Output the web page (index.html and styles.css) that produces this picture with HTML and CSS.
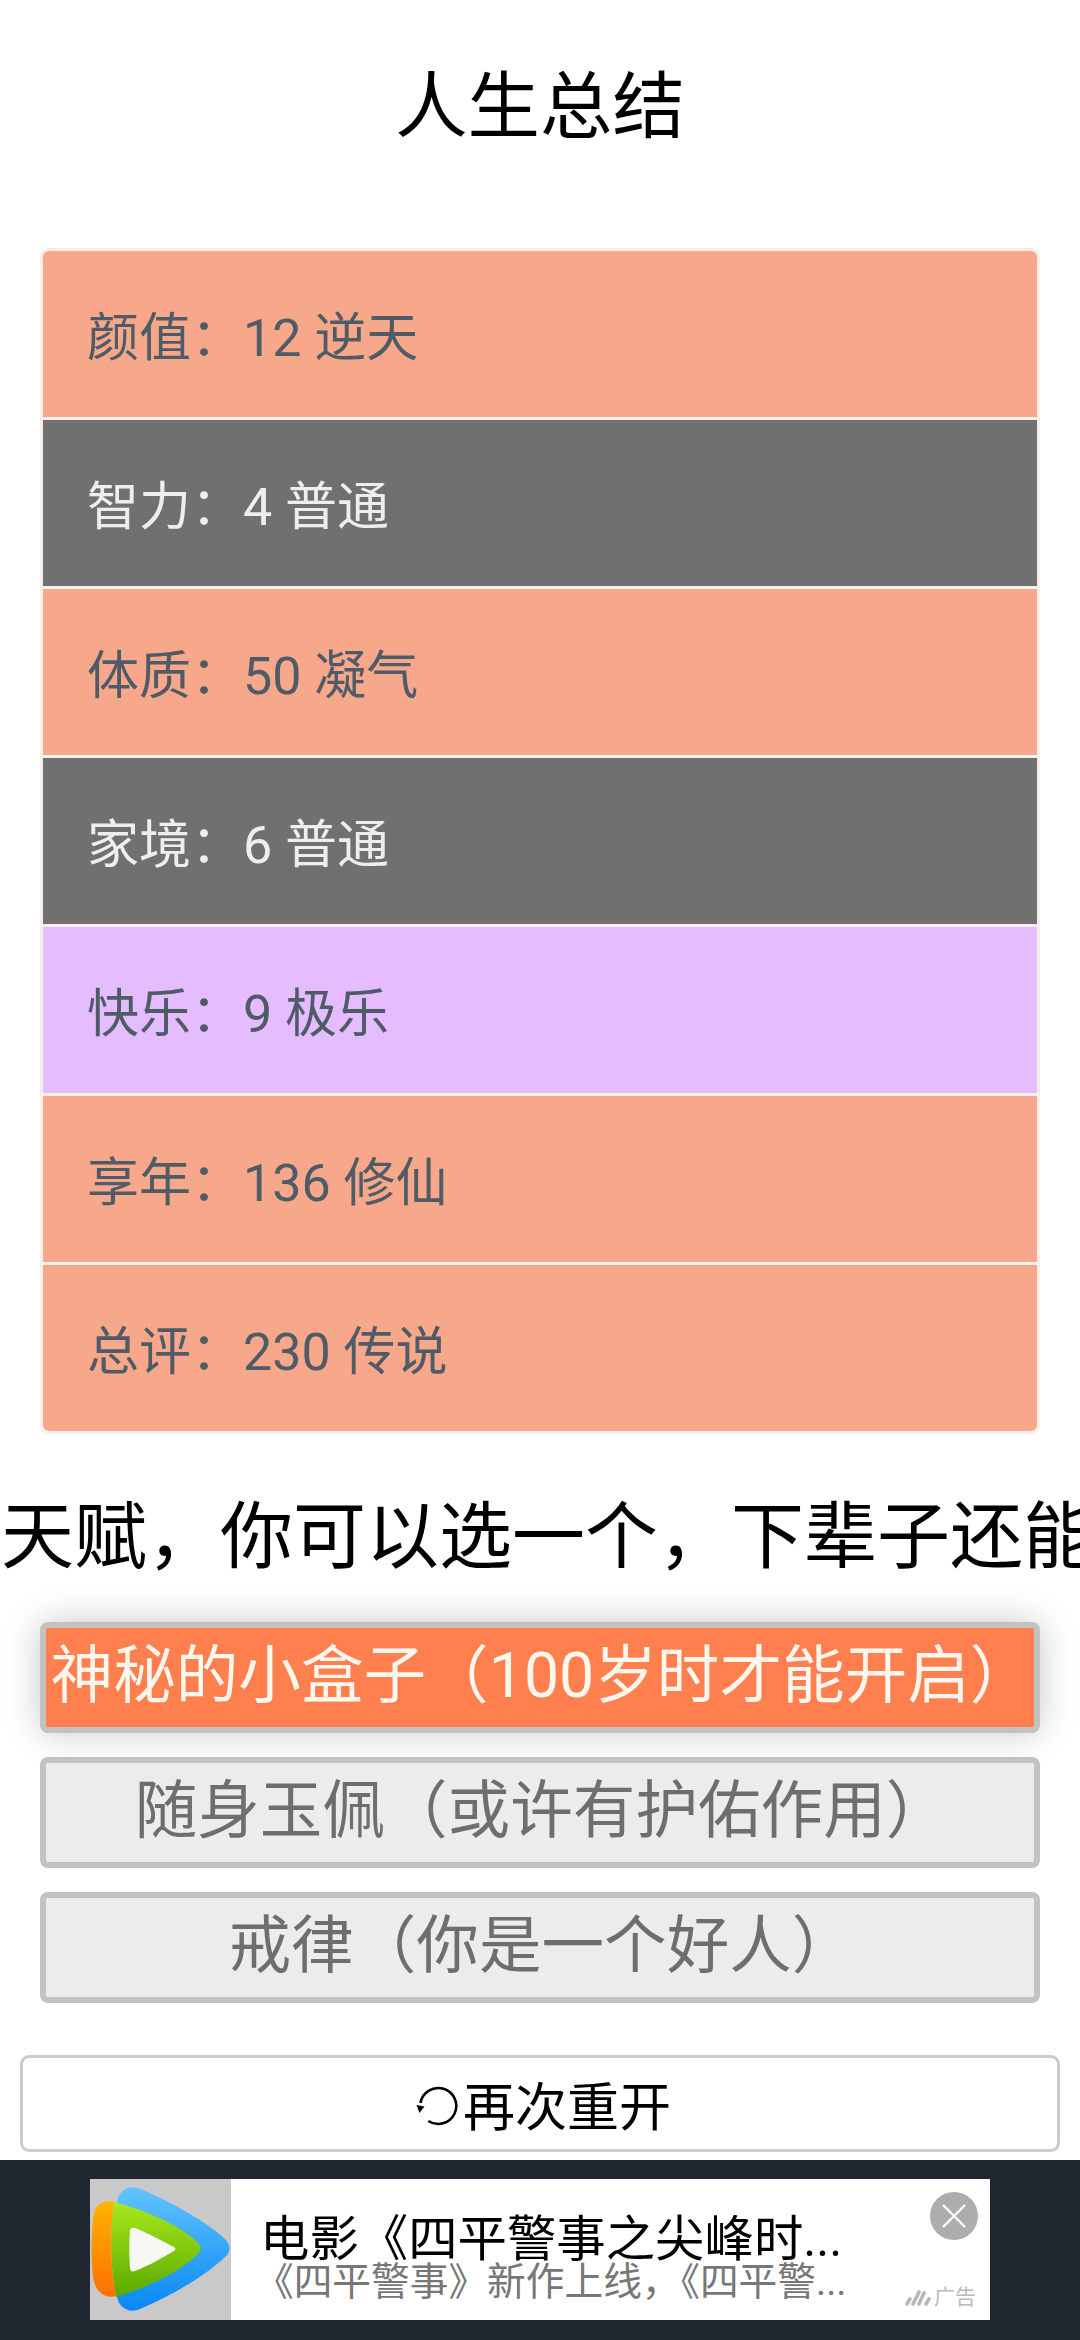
FILE: index.html
```html
<!DOCTYPE html>
<html lang="zh-CN">
<head>
<meta charset="utf-8">
<title>人生总结</title>
<link rel="stylesheet" href="styles.css">
</head>
<body>
<main class="page">
  <h1 class="title">人生总结</h1>
  <ul class="summary">
    <li class="row peach">颜值：12 逆天</li>
    <li class="row gray">智力：4 普通</li>
    <li class="row peach">体质：50 凝气</li>
    <li class="row gray">家境：6 普通</li>
    <li class="row violet">快乐：9 极乐</li>
    <li class="row peach">享年：136 修仙</li>
    <li class="row peach">总评：230 传说</li>
  </ul>
  <h2 class="prompt">天赋，你可以选一个，下辈子还能</h2>
  <div class="talents">
    <button class="talent selected">神秘的小盒子（100岁时才能开启）</button>
    <button class="talent">随身玉佩（或许有护佑作用）</button>
    <button class="talent">戒律（你是一个好人）</button>
  </div>
  <button class="restart">
    <svg class="restart-icon" viewBox="0 0 42 40" aria-hidden="true">
      <path d="M4.5 17 A18 18 0 1 1 12.3 35" fill="none" stroke="#000" stroke-width="2.6"/>
      <path d="M0.5 19 L8.5 20.5 L3.5 27 Z" fill="#000"/>
    </svg>再次重开
  </button>
</main>
<footer class="ad-band">
  <div class="ad">
    <div class="ad-image">
      <svg viewBox="0 0 141 141" class="ad-logo" aria-hidden="true">
        <defs>
          <linearGradient id="blue" x1="0" y1="0" x2="0" y2="1"><stop offset="0" stop-color="#62c4ff"/><stop offset="1" stop-color="#0887f4"/></linearGradient>
          <linearGradient id="green" x1="0" y1="0" x2="0" y2="1"><stop offset="0" stop-color="#a9e81c"/><stop offset="1" stop-color="#5aaa00"/></linearGradient>
          <linearGradient id="orange" x1="0" y1="0" x2="0" y2="1"><stop offset="0" stop-color="#ffb400"/><stop offset="1" stop-color="#ff6f00"/></linearGradient>
        </defs>
        <path d="M27 24 C28 12 38 6 48 9 C85 24 122 47 135 60 C141 66 141 73 135 78 C122 91 90 113 50 130 C38 135 29 128 27 118 Z" fill="url(#blue)"/>
        <path d="M24 23 C60 32 95 50 107 63 C112 68 112 71 107 76 C90 92 60 108 26 118 C20 90 20 50 24 23 Z" fill="url(#green)"/>
        <path d="M24 23 C12 20 4 26 3 40 C1 60 1 80 3 98 C5 112 14 120 26 117 C20 90 20 50 24 23 Z" fill="url(#orange)"/>
        <path d="M40 52 C40 49 42 48 45 49 C60 55 72 62 84 68 C86 69 86 71 84 72 C72 79 60 86 45 92 C42 93 40 92 40 89 C39 76 39 64 40 52 Z" fill="#f6f8f4"/>
      </svg>
    </div>
    <div class="ad-text">
      <p class="ad-title">电影《四平警事之尖峰时...</p>
      <p class="ad-sub">《四平警事》新作上线，《四平警...</p>
    </div>
    <div class="ad-side">
      <svg class="ad-close" viewBox="0 0 48 48" aria-hidden="true">
        <circle cx="24" cy="24" r="24" fill="#adadad"/>
        <path d="M13 13 L35 35 M35 13 L13 35" stroke="#fff" stroke-width="2.4"/>
      </svg>
      <div class="ad-mark">
        <svg class="ad-stripes" viewBox="0 0 26 18" aria-hidden="true">
          <path d="M2 16 L5 11 M8 16 L14 4 M14 16 L19 5 M21 16 L24 11" stroke="#b8b8b8" stroke-width="3.6" stroke-linecap="round"/>
        </svg>
        <span>广告</span>
      </div>
    </div>
  </div>
</footer>
</body>
</html>
```
FILE: styles.css
```css
* { box-sizing: border-box; }
html, body { margin: 0; padding: 0; }
body {
  width: 1080px;
  height: 2340px;
  overflow: hidden;
  background: #fff;
  display: flex;
  flex-direction: column;
  font-family: Roboto, "Noto Sans CJK SC", sans-serif;
}
.page { flex: 1; display: flex; flex-direction: column; align-items: center; }
.title {
  margin: 0;
  padding-top: 57px;
  height: 248px;
  font-size: 72.4px;
  line-height: 102px;
  font-weight: 400;
  color: #000;
  text-align: center;
}
.summary {
  list-style: none;
  margin: 0;
  padding: 0;
  width: 1000px;
  border: 3px solid #f6efe9;
  border-bottom-color: #eff0f0;
  border-radius: 9px;
  overflow: hidden;
  display: flex;
  flex-direction: column;
  gap: 3px;
  background: #f7efe9;
}
.row {
  height: 166px;
  padding: 0 0 2px 44px;
  display: flex;
  align-items: center;
  font-size: 52px;
  color: #4f5b66;
}
.peach { background: #f8a88a; }
.gray { background: #707070; color: #eee; }
.violet { background: #e5bcff; }
.prompt {
  margin: 0;
  width: 1080px;
  padding: 53px 0 0 1px;
  height: 188px;
  font-size: 73px;
  line-height: 100px;
  font-weight: 400;
  white-space: nowrap;
  overflow: hidden;
  color: #000;
}
.talents { display: flex; flex-direction: column; gap: 24px; width: 1000px; }
.talent {
  height: 111px;
  padding: 0 0 2px 3px;
  border: 6px solid #c2c2c2;
  border-radius: 8px;
  background: #ececec;
  color: #6e6e6e;
  font: inherit;
  font-size: 62.6px;
  line-height: 1;
  white-space: nowrap;
}
.talent.selected {
  background: #ff7f4f;
  color: #fff6ee;
  box-shadow: 0 0 36px rgba(0, 0, 0, .22);
}
.restart {
  margin-top: 52px;
  width: 1040px;
  height: 97px;
  padding: 0 0 0 5px;
  border: 3px solid #ccc;
  border-radius: 9px;
  background: #fff;
  color: #000;
  font: inherit;
  font-size: 52px;
  display: flex;
  align-items: center;
  justify-content: center;
}
.restart-icon { width: 42px; height: 40px; margin: 4px 5px 0 2px; }
.ad-band {
  height: 180px;
  background: #1f2630;
  padding-top: 19px;
  display: flex;
  justify-content: center;
  flex: none;
}
.ad {
  width: 900px;
  height: 141px;
  background: #fff;
  display: flex;
}
.ad-image { width: 141px; height: 141px; background: #c9c9c9; flex: none; }
.ad-logo { display: block; width: 141px; height: 141px; }
.ad-text { flex: 1; padding: 31px 0 0 29px; min-width: 0; }
.ad-title {
  margin: 0;
  font-size: 49.4px;
  line-height: 58px;
  color: #000;
  white-space: nowrap;
}
.ad-sub {
  margin: -10px 0 0 -5px;
  font-size: 38.7px;
  line-height: 48px;
  color: #777;
  white-space: nowrap;
}
.ad-side { width: 90px; flex: none; position: relative; }
.ad-close { position: absolute; top: 13px; right: 12px; width: 48px; height: 48px; }
.ad-mark {
  position: absolute;
  right: 14px;
  bottom: 11px;
  display: flex;
  align-items: center;
  gap: 3px;
  font-size: 21px;
  line-height: 24px;
  color: #bbb;
}
.ad-stripes { width: 26px; height: 18px; }
```
